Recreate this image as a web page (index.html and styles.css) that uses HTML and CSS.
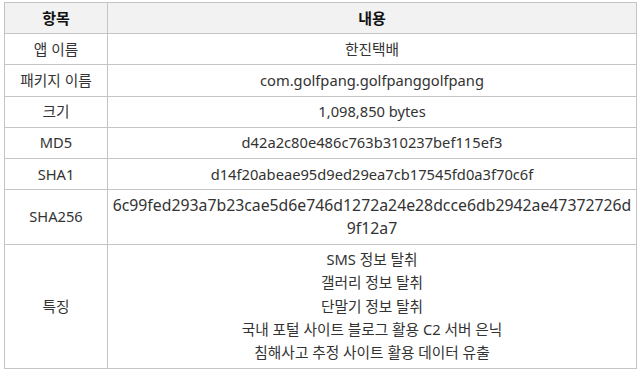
FILE: index.html
```html
<!DOCTYPE html>
<html lang="ko">
<head>
<meta charset="utf-8">
<title>악성 앱 정보</title>
<link rel="stylesheet" href="styles.css">
</head>
<body>
<div class="wrap">
  <table class="info">
    <thead>
      <tr><th class="key">항목</th><th class="val">내용</th></tr>
    </thead>
    <tbody>
      <tr><td class="key">앱 이름</td><td class="val">한진택배</td></tr>
      <tr><td class="key">패키지 이름</td><td class="val">com.golfpang.golfpanggolfpang</td></tr>
      <tr><td class="key">크기</td><td class="val">1,098,850 bytes</td></tr>
      <tr><td class="key">MD5</td><td class="val">d42a2c80e486c763b310237bef115ef3</td></tr>
      <tr><td class="key">SHA1</td><td class="val">d14f20abeae95d9ed29ea7cb17545fd0a3f70c6f</td></tr>
      <tr><td class="key">SHA256</td><td class="val hash">6c99fed293a7b23cae5d6e746d1272a24e28dcce6db2942ae47372726d9f12a7</td></tr>
      <tr><td class="key">특징</td><td class="val">SMS 정보 탈취<br>갤러리 정보 탈취<br>단말기 정보 탈취<br>국내 포털 사이트 블로그 활용 C2 서버 은닉<br>침해사고 추정 사이트 활용 데이터 유출</td></tr>
    </tbody>
  </table>
</div>
</body>
</html>
```

FILE: styles.css
```css
html, body {
  margin: 0;
  padding: 0;
  background: #ffffff;
}

.wrap {
  padding: 2px 0 0 4px;
}

.info {
  border-collapse: collapse;
  width: 633px;
  table-layout: fixed;
  font-family: "Noto Sans", "Noto Sans CJK KR", sans-serif;
  font-size: 14.7px;
  line-height: 23.2px;
  color: #333333;
}

.info th,
.info td {
  border: 1px solid #c4c4c4;
  padding: 3.5px 6px;
  text-align: center;
  vertical-align: middle;
}

.info th {
  background: #f2f2f2;
  color: #111111;
  font-weight: 700;
  font-size: 15px;
}

.info .key {
  width: 90px;
}

.info .hash {
  padding-left: 3px;
  padding-right: 3px;
  font-size: 15.8px;
  word-break: break-all;
}
```
